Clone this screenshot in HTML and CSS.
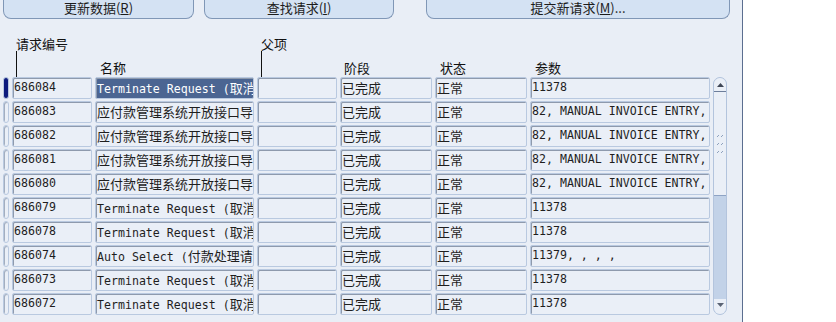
FILE: index.html
```html
<!DOCTYPE html>
<html lang="zh-CN">
<head>
<meta charset="utf-8">
<title>请求</title>
<link rel="stylesheet" href="styles.css">
</head>
<body>
<div class="page">
  <div class="panel">
    <div class="toolbar">
      <div class="btn b1">更新数据(<u>R</u>)</div>
      <div class="btn b2">查找请求(<u>I</u>)</div>
      <div class="btn b3">提交新请求(<u>M</u>)...</div>
    </div>
    <div class="head">
      <div class="hcell h-id"><span>请求编号</span><i class="tick"></i></div>
      <div class="hcell h-name">名称</div>
      <div class="hcell h-parent"><span>父项</span><i class="tick"></i></div>
      <div class="hcell h-phase">阶段</div>
      <div class="hcell h-status">状态</div>
      <div class="hcell h-param">参数</div>
    </div>
    <div class="body">
      <div class="rows">
        <div class="row">
          <div class="ind on"></div>
          <div class="cell">686084</div>
          <div class="cell sel">Terminate Request (<span class="zh">取消请求)</span></div>
          <div class="cell"></div>
          <div class="cell"><span class="zh">已完成</span></div>
          <div class="cell"><span class="zh">正常</span></div>
          <div class="cell">11378</div>
        </div>
        <div class="row">
          <div class="ind"></div>
          <div class="cell">686083</div>
          <div class="cell"><span class="zh">应付款管理系统开放接口导入</span></div>
          <div class="cell"></div>
          <div class="cell"><span class="zh">已完成</span></div>
          <div class="cell"><span class="zh">正常</span></div>
          <div class="cell">82, MANUAL INVOICE ENTRY,</div>
        </div>
        <div class="row">
          <div class="ind"></div>
          <div class="cell">686082</div>
          <div class="cell"><span class="zh">应付款管理系统开放接口导入</span></div>
          <div class="cell"></div>
          <div class="cell"><span class="zh">已完成</span></div>
          <div class="cell"><span class="zh">正常</span></div>
          <div class="cell">82, MANUAL INVOICE ENTRY,</div>
        </div>
        <div class="row">
          <div class="ind"></div>
          <div class="cell">686081</div>
          <div class="cell"><span class="zh">应付款管理系统开放接口导入</span></div>
          <div class="cell"></div>
          <div class="cell"><span class="zh">已完成</span></div>
          <div class="cell"><span class="zh">正常</span></div>
          <div class="cell">82, MANUAL INVOICE ENTRY,</div>
        </div>
        <div class="row">
          <div class="ind"></div>
          <div class="cell">686080</div>
          <div class="cell"><span class="zh">应付款管理系统开放接口导入</span></div>
          <div class="cell"></div>
          <div class="cell"><span class="zh">已完成</span></div>
          <div class="cell"><span class="zh">正常</span></div>
          <div class="cell">82, MANUAL INVOICE ENTRY,</div>
        </div>
        <div class="row">
          <div class="ind"></div>
          <div class="cell">686079</div>
          <div class="cell">Terminate Request (<span class="zh">取消请求)</span></div>
          <div class="cell"></div>
          <div class="cell"><span class="zh">已完成</span></div>
          <div class="cell"><span class="zh">正常</span></div>
          <div class="cell">11378</div>
        </div>
        <div class="row">
          <div class="ind"></div>
          <div class="cell">686078</div>
          <div class="cell">Terminate Request (<span class="zh">取消请求)</span></div>
          <div class="cell"></div>
          <div class="cell"><span class="zh">已完成</span></div>
          <div class="cell"><span class="zh">正常</span></div>
          <div class="cell">11378</div>
        </div>
        <div class="row">
          <div class="ind"></div>
          <div class="cell">686074</div>
          <div class="cell">Auto Select (<span class="zh">付款处理请求)</span></div>
          <div class="cell"></div>
          <div class="cell"><span class="zh">已完成</span></div>
          <div class="cell"><span class="zh">正常</span></div>
          <div class="cell">11379, , , ,</div>
        </div>
        <div class="row">
          <div class="ind"></div>
          <div class="cell">686073</div>
          <div class="cell">Terminate Request (<span class="zh">取消请求)</span></div>
          <div class="cell"></div>
          <div class="cell"><span class="zh">已完成</span></div>
          <div class="cell"><span class="zh">正常</span></div>
          <div class="cell">11378</div>
        </div>
        <div class="row">
          <div class="ind"></div>
          <div class="cell">686072</div>
          <div class="cell">Terminate Request (<span class="zh">取消请求)</span></div>
          <div class="cell"></div>
          <div class="cell"><span class="zh">已完成</span></div>
          <div class="cell"><span class="zh">正常</span></div>
          <div class="cell">11378</div>
        </div>
      </div>
      <div class="scroll">
        <div class="s-up">
          <svg width="7" height="4" viewBox="0 0 7 4"><polygon points="0,4 3.5,0 7,4" fill="#3e4656"/></svg>
        </div>
        <div class="s-thumb">
          <svg width="8" height="22" viewBox="0 0 8 22">
            <path d="M1 4 L3 2 M5 4 L7 2 M1 12 L3 10 M5 12 L7 10 M1 20 L3 18 M5 20 L7 18" stroke="#8ea1bd" stroke-width="1" fill="none"/>
          </svg>
        </div>
        <div class="s-track"></div>
        <div class="s-down">
          <svg width="7" height="4" viewBox="0 0 7 4"><polygon points="0,0 7,0 3.5,4" fill="#5a6374"/></svg>
        </div>
      </div>
    </div>
  </div>
  <div class="blank"></div>
</div>
</body>
</html>
```
FILE: styles.css
```css
* { box-sizing: border-box; }

html, body {
  margin: 0;
  padding: 0;
  background: #ffffff;
}

body {
  width: 836px;
  height: 322px;
  overflow: hidden;
  font-family: "Noto Sans CJK SC", sans-serif;
}

.page {
  display: flex;
  height: 322px;
}

.panel {
  width: 743px;
  height: 322px;
  flex: none;
  background: #e9eef6;
  border-right: 1px solid #5b6e90;
  overflow: hidden;
}

.blank {
  flex: 1;
  background: #ffffff;
}

/* toolbar buttons (cut at the top) */
.toolbar {
  display: flex;
  height: 19px;
}

.btn {
  height: 19px;
  background: #d4e2f3;
  border: 1px solid #8097b6;
  border-top: none;
  border-radius: 0 0 8px 8px;
  font-size: 13px;
  line-height: 15px;
  text-align: center;
  color: #1c1c1c;
  white-space: nowrap;
}

.btn u { text-decoration: underline; text-underline-offset: 1px; }

.b1 { width: 191px; margin-left: 3px; }
.b2 { width: 190px; margin-left: 10px; }
.b3 { width: 304px; margin-left: 32px; }

/* column header */
.head {
  display: grid;
  grid-template-columns: 6px 80px 159px 80px 92px 92px 180px;
  column-gap: 3px;
  margin-left: 3px;
  padding-top: 17px;
  height: 58px;
}

.hcell {
  font-size: 13px;
  line-height: 15px;
  color: #111;
  white-space: nowrap;
  align-self: end;
  margin-bottom: 2px;
}

.h-id, .h-parent {
  display: flex;
  flex-direction: column;
  align-self: stretch;
  margin-bottom: 0;
  padding-left: 4px;
}

.h-id { grid-column: 2; }
.h-name { grid-column: 3; padding-left: 5px; }
.h-parent { grid-column: 4; }
.h-phase { grid-column: 5; padding-left: 4px; }
.h-status { grid-column: 6; padding-left: 5px; }
.h-param { grid-column: 7; padding-left: 5px; }

.tick {
  display: block;
  width: 1px;
  flex: 1;
  background: #111;
}

/* table body */
.body {
  display: flex;
  gap: 3px;
  margin-left: 3px;
}

.rows {
  display: flex;
  flex-direction: column;
  gap: 2px;
}

.row {
  display: grid;
  grid-template-columns: 6px 80px 159px 80px 92px 92px 180px;
  column-gap: 3px;
  height: 22px;
}

.cell {
  background: #eaeff7;
  border: 1px solid #b9c9e0;
  box-shadow: inset 1px 1px 0 #8e9aad;
  border-radius: 2px;
  font-family: "DejaVu Sans Mono", "Noto Sans CJK SC", monospace;
  font-size: 11.6px;
  line-height: 19px;
  padding-left: 1px;
  white-space: nowrap;
  overflow: hidden;
  color: #1e1e1e;
}

.cell.sel {
  background: #4b6592;
  color: #ffffff;
}

.zh {
  font-family: "Noto Sans CJK SC", sans-serif;
  font-size: 13px;
}

.ind {
  background: #eaeff7;
  border: 1px solid #b9c9e0;
  box-shadow: inset 1px 1px 0 #a3aebf;
  border-radius: 3px;
}

.ind.on {
  background: #0d1b7e;
  box-shadow: none;
}

/* scrollbar */
.scroll {
  width: 14px;
  display: flex;
  flex-direction: column;
  border: 1px solid #b3c4dd;
  border-radius: 7px;
  overflow: hidden;
  background: #c2d2e8;
}

.s-up {
  height: 14px;
  flex: none;
  background: #eaeff7;
  border-bottom: 1px solid #6d7e9b;
  display: flex;
  align-items: center;
  justify-content: center;
}

.s-thumb {
  height: 104px;
  flex: none;
  background: #eaeff7;
  border-bottom: 1px solid #8ea3c4;
  display: flex;
  align-items: center;
  justify-content: center;
}

.s-track { flex: 1; }

.s-down {
  height: 15px;
  flex: none;
  background: #eaeff7;
  display: flex;
  align-items: flex-start;
  justify-content: center;
  padding-top: 4px;
}

.s-up svg, .s-down svg, .s-thumb svg { display: block; }
```
